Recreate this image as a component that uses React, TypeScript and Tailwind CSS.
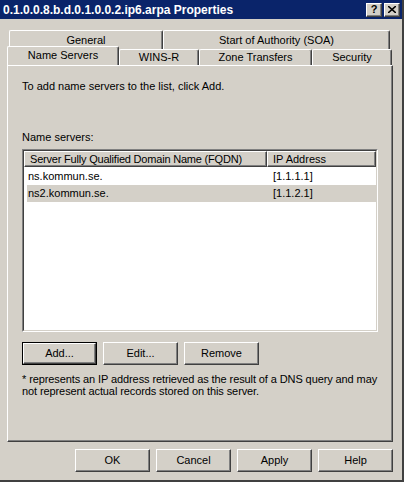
import React from 'react';

const font = { fontFamily: '"Liberation Sans", Arial, sans-serif' };

// classic 3D raised edge: white top/left, dark bottom/right with a grey inner line
const raised =
    'border-t border-l border-t-white border-l-white border-r border-b border-r-[#404040] border-b-[#404040] shadow-[inset_-1px_-1px_0_#808080]';

function Tab({ label, width, selected }: { label: string; width: number; selected?: boolean }) {
    return (
        <div
            className={`flex items-center justify-center border-t border-l border-t-white border-l-white border-r border-r-[#404040] shadow-[inset_-1px_0_0_#808080] rounded-tl-[2px] rounded-tr-[2px] bg-[#d4d0c8] text-[11px] text-black ${
                selected ? 'relative z-10 -mt-[2px] h-[19px] pb-[2px]' : 'h-full'
            }`}
            style={{ width }}
        >
            {label}
        </div>
    );
}

function Button({ label, isDefault }: { label: string; isDefault?: boolean }) {
    return (
        <div className={`w-[75px] h-[23px] ${isDefault ? 'border border-black' : ''}`}>
            <div className={`h-full w-full ${raised} flex items-center justify-center text-[11px] text-black bg-[#d4d0c8]`}>
                {label}
            </div>
        </div>
    );
}

function TitleButton({ children }: { children: React.ReactNode }) {
    return (
        <div className={`w-[16px] h-[14px] ${raised} bg-[#d4d0c8] flex items-center justify-center text-[11px] font-bold text-black leading-none`}>
            {children}
        </div>
    );
}

const servers = [
    { name: 'ns.kommun.se.', ip: '[1.1.1.1]' },
    { name: 'ns2.kommun.se.', ip: '[1.1.2.1]' },
];

export default function App() {
    return (
        <div
            className="w-[404px] h-[482px] bg-[#d4d0c8] flex flex-col border-r-2 border-b-2 border-r-[#404040] border-b-[#404040] overflow-hidden"
            style={font}
        >
            {/* title bar */}
            <div className="h-[19px] bg-[#0a246a] flex items-center justify-between pl-[3px] pr-[2px] shrink-0">
                <span className="text-white font-bold text-[12px]">0.1.0.0.8.b.d.0.1.0.0.2.ip6.arpa Properties</span>
                <div className="flex gap-[2px]">
                    <TitleButton>?</TitleButton>
                    <TitleButton>
                        <svg width="8" height="7" viewBox="0 0 8 7">
                            <path d="M0 0 L8 7 M8 0 L0 7" stroke="black" strokeWidth="1.6" />
                        </svg>
                    </TitleButton>
                </div>
            </div>

            {/* tabs */}
            <div className="flex h-[19px] mt-[11px] ml-[9px]">
                <Tab label="General" width={154} />
                <Tab label="Start of Authority (SOA)" width={227} />
            </div>
            <div className="flex h-[16px] ml-[7px] items-end">
                <Tab label="Name Servers" width={112} selected />
                <div className="flex h-[16px]">
                    <Tab label="WINS-R" width={80} />
                    <Tab label="Zone Transfers" width={113} />
                    <Tab label="Security" width={80} />
                </div>
            </div>

            {/* panel */}
            <div className="ml-[7px] w-[386px] h-[377px] border-t border-l border-t-white border-l-white border-r border-b border-r-[#404040] border-b-[#404040] shadow-[inset_-1px_-1px_0_#808080] pl-[14px] pr-[13px] pt-[14px] flex flex-col text-[11px] text-black">
                <div className="leading-[13px]">To add name servers to the list, click Add.</div>
                <div className="leading-[13px] mt-[38px]">Name servers:</div>

                {/* list view */}
                <div className="mt-[5px] w-[356px] h-[183px] border-t border-l border-t-[#808080] border-l-[#808080] border-r border-b border-r-white border-b-white bg-white">
                    <div className="h-full w-full border-t border-l border-t-[#404040] border-l-[#404040] border-r border-b border-r-[#d4d0c8] border-b-[#d4d0c8] flex flex-col">
                        <div className="flex h-[16px] shrink-0">
                            <div className={`w-[243px] ${raised} bg-[#d4d0c8] pl-[5px] flex items-center tracking-[-0.2px]`}>
                                Server Fully Qualified Domain Name (FQDN)
                            </div>
                            <div className={`flex-1 ${raised} bg-[#d4d0c8] pl-[5px] flex items-center`}>IP Address</div>
                        </div>
                        {servers.map((s, i) => (
                            <div
                                key={s.name}
                                className={`flex h-[17px] items-center ml-[3px] ${i === 1 ? 'bg-[#d4d0c8]' : ''}`}
                                style={i === 0 ? { marginTop: 1 } : undefined}
                            >
                                <div className="w-[240px] pl-[1px]">{s.name}</div>
                                <div className="pl-[6px]">{s.ip}</div>
                            </div>
                        ))}
                    </div>
                </div>

                <div className="flex gap-[6px] mt-[10px]">
                    <Button label="Add..." isDefault />
                    <Button label="Edit..." />
                    <Button label="Remove" />
                </div>

                <div className="mt-[8px] leading-[12px] w-[362px] tracking-[-0.1px]">
                    * represents an IP address retrieved as the result of a DNS query and may not represent actual records stored on this server.
                </div>
            </div>

            {/* dialog buttons */}
            <div className="flex gap-[6px] ml-[75px] mt-[7px]">
                <Button label="OK" />
                <Button label="Cancel" />
                <Button label="Apply" />
                <Button label="Help" />
            </div>
        </div>
    );
}
